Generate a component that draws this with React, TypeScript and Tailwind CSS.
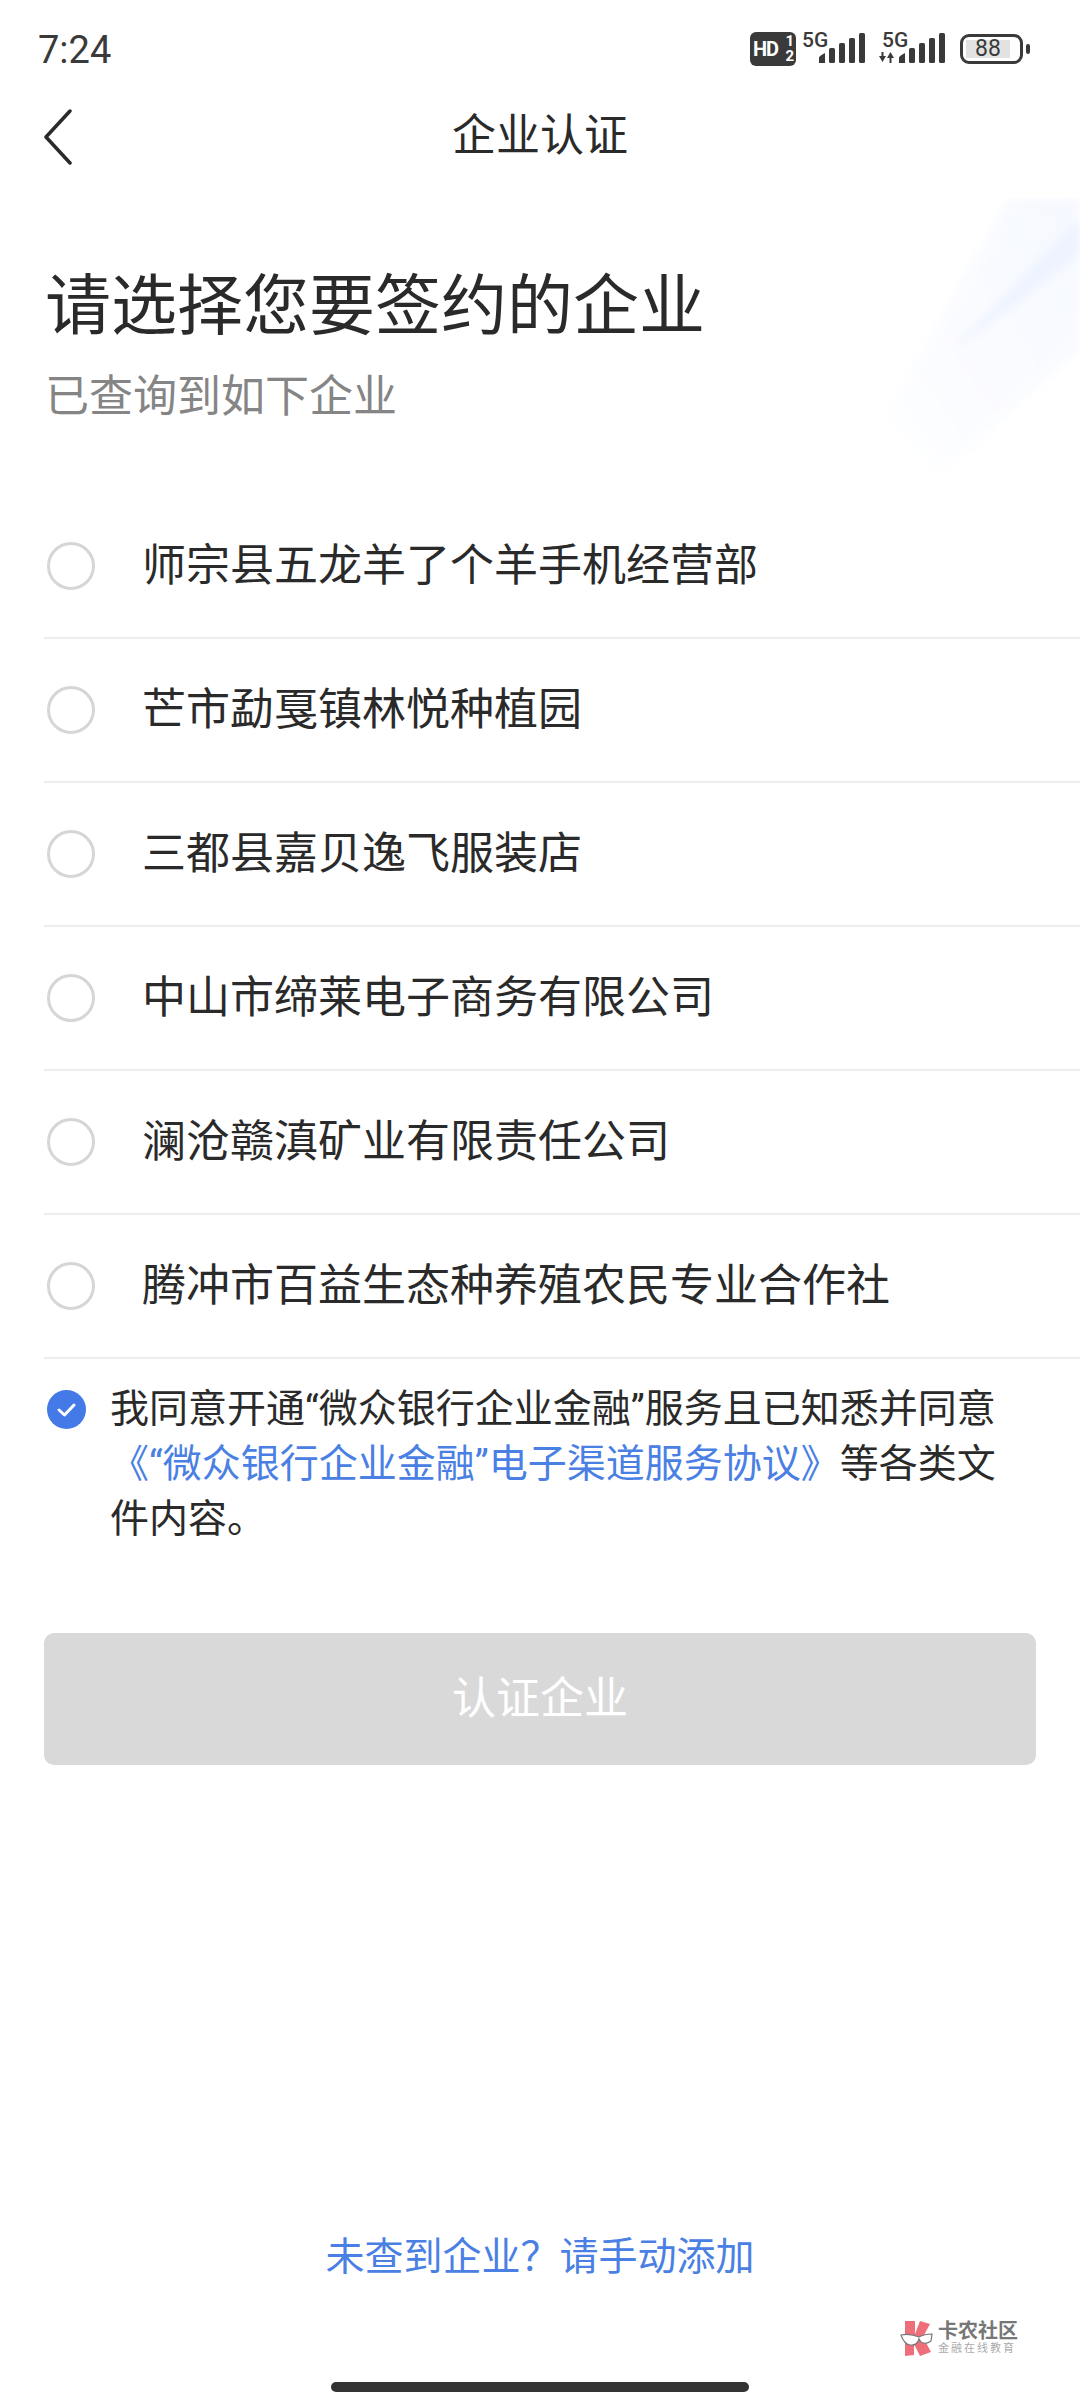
import React from "react";

const cn = { fontFamily: 'Roboto, "Noto Sans CJK SC", sans-serif' };

const companies = [
  "师宗县五龙羊了个羊手机经营部",
  "芒市勐戛镇林悦种植园",
  "三都县嘉贝逸飞服装店",
  "中山市缔莱电子商务有限公司",
  "澜沧赣滇矿业有限责任公司",
  "腾冲市百益生态种养殖农民专业合作社",
];

function SignalBars() {
  return (
    <svg width="48" height="32" viewBox="0 0 48 32" fill="#3a3a3a" className="block">
      <path d="M1 25.500 Q1 24 7 21 V31 H1z" />
      <rect x="11" y="16" width="6" height="15" rx="1.500" />
      <rect x="21" y="11" width="6" height="20" rx="1.500" />
      <rect x="31" y="6" width="6" height="25" rx="1.500" />
      <rect x="41" y="1" width="6" height="30" rx="1.500" />
    </svg>
  );
}

function NetworkGroup({ arrows }: { arrows?: boolean }) {
  return (
    <div className="flex items-end">
      <div className="relative w-[16px] h-[32px]">
        <span
          className="absolute left-[0px] top-[-2px] text-[21px] leading-[20px] font-medium text-[#3a3a3a]"
          style={cn}
        >
          5G
        </span>
        {arrows && (
          <svg width="15" height="13" viewBox="0 0 15 13" fill="#3a3a3a" className="absolute left-[-3px] bottom-[0px]">
            <path d="M0 5h2.500V1h2v4H7l-3.500 6zM8 7h2.500v5h2V7H15l-3.500-6z" />
          </svg>
        )}
      </div>
      <SignalBars />
    </div>
  );
}

function StatusBar() {
  return (
    <div className="h-[96px] pl-[38px] pr-[50px] pt-[28px] flex justify-between items-start" style={cn}>
      <span className="text-[38px] leading-[44px] text-[#3a3a3a]">7:24</span>
      <div className="flex items-start pt-[4px]">
        <div className="w-[46px] h-[34px] rounded-[6px] bg-[#3a3a3a] text-white flex items-center justify-between pl-[3px] pr-[2px]">
          <span className="text-[20px] leading-[20px] font-bold tracking-[-1px]">HD</span>
          <span className="flex flex-col items-center text-[15px] leading-[15px] font-bold">
            <span>1</span>
            <span>2</span>
          </span>
        </div>
        <div className="ml-[6px]">
          <NetworkGroup />
        </div>
        <div className="ml-[16px]">
          <NetworkGroup arrows />
        </div>
        <div className="ml-[14px] flex items-center h-[34px]">
          <div className="w-[63px] h-[30px] rounded-[9px] border-[3px] border-[#3a3a3a] p-[3px]">
            <div className="w-[44px] h-[18px] bg-[#e2e2e2] flex items-center justify-center">
              <span className="text-[23px] leading-[18px] text-[#3a3a3a]">88</span>
            </div>
          </div>
          <div className="ml-[3px] w-[4px] h-[10px] rounded-[2px] bg-[#3a3a3a]" />
        </div>
      </div>
    </div>
  );
}

function NavBar() {
  return (
    <div className="relative h-[80px] flex items-center justify-center">
      <svg
        width="32"
        height="56"
        viewBox="0 0 32 56"
        fill="none"
        stroke="#2a2a2a"
        strokeWidth="3.500"
        strokeLinecap="round"
        strokeLinejoin="round"
        className="absolute left-[43px] top-[13px]"
      >
        <path d="M27 2 L3 28 L27 54" />
      </svg>
      <span className="text-[44px] leading-[60px] text-[#2a2a2a]" style={cn}>
        企业认证
      </span>
    </div>
  );
}

// Pale diagonal ribbons in the top right corner of the page
function CornerGlow() {
  return (
    <svg
      width="220"
      height="300"
      viewBox="0 0 220 300"
      className="absolute right-0 top-[198px] pointer-events-none"
    >
      <defs>
        <linearGradient id="band" x1="1" y1="0" x2="0" y2="1">
          <stop offset="0" stopColor="#f4f7ff" />
          <stop offset="1" stopColor="#ffffff" />
        </linearGradient>
        <filter id="soft">
          <feGaussianBlur stdDeviation="5" />
        </filter>
      </defs>
      <path d="M150 0 H220 V150 L80 280 L20 220 Z" fill="url(#band)" opacity="0.8" filter="url(#soft)" />
      <path d="M220 20 V55 L125 130 L92 152 Z" fill="#e8f0ff" opacity="0.7" filter="url(#soft)" />
    </svg>
  );
}

function Watermark() {
  return (
    <div className="absolute left-[900px] top-[2320px] flex items-start pointer-events-none" style={cn}>
      <svg width="40" height="38" viewBox="0 0 40 38">
        <path d="M5 1 H15 V14 L20 1 L30 4 L23 17 L31 32 L20 36 L14 24 V35 L5 36 Z" fill="#ee6f7a" />
        <path d="M1 15 Q10 13 19 17 Q24 14 32 14 L31 21 Q26 25 21 22 L19 19 Q17 26 10 25 Q4 24 1 15Z" fill="#ffffff" stroke="#777777" strokeWidth="1.200" />
      </svg>
      <div className="-ml-[2px] flex flex-col">
        <span className="text-[20px] leading-[22px] font-bold text-[#777777]">卡农社区</span>
        <span className="text-[11px] leading-[14px] text-[#aaaaaa] tracking-[2px]">金融在线教育</span>
      </div>
    </div>
  );
}

export default function App() {
  return (
    <div className="relative w-[1080px] h-[2408px] bg-white overflow-hidden flex flex-col" style={cn}>
      <CornerGlow />
      <StatusBar />
      <NavBar />

      <div className="relative pl-[45px] pt-[87px]">
        <h1 className="text-[66px] leading-[88px] font-normal text-[#2a2a2a]">请选择您要签约的企业</h1>
        <p className="mt-[16px] text-[44px] leading-[60px] text-[#858585]">已查询到如下企业</p>
      </div>

      <ul className="relative mt-[68px] ml-[44px]">
        {companies.map((name) => (
          <li key={name} className="h-[144px] flex items-center border-b-2 border-[#eeeeee]">
            <span className="ml-[3px] w-[48px] h-[48px] rounded-full border-[3px] border-[#d6d6d6] shrink-0" />
            <span className="ml-[47px] text-[44px] leading-[60px] text-[#2a2a2a]">{name}</span>
          </li>
        ))}
      </ul>

      <div className="flex items-start pl-[47px] pt-[23px]">
        <svg width="39" height="39" viewBox="0 0 39 39" className="mt-[8px] shrink-0">
          <circle cx="19.500" cy="19.500" r="19.500" fill="#4479e8" />
          <path d="M12 20 L17.500 25 L27 15" fill="none" stroke="#ffffff" strokeWidth="3" strokeLinecap="round" strokeLinejoin="round" />
        </svg>
        <p className="ml-[24px] w-[910px] text-[39px] leading-[55px] text-[#2a2a2a]">
          我同意开通“微众银行企业金融”服务且已知悉并同意
          <span className="text-[#4a80e4]">《“微众银行企业金融”电子渠道服务协议》</span>
          等各类文件内容。
        </p>
      </div>

      <button className="mt-[86px] mx-[44px] h-[132px] rounded-[10px] bg-[#d9d9d9] text-white text-[44px]">
        认证企业
      </button>

      <div className="mt-auto flex flex-col items-center">
        <a className="text-[39px] leading-[56px] text-[#4a80e4]">未查到企业？请手动添加</a>
        <div className="mt-[97px] mb-[16px] w-[418px] h-[10px] rounded-full bg-[#333333]" />
      </div>

      <Watermark />
    </div>
  );
}
